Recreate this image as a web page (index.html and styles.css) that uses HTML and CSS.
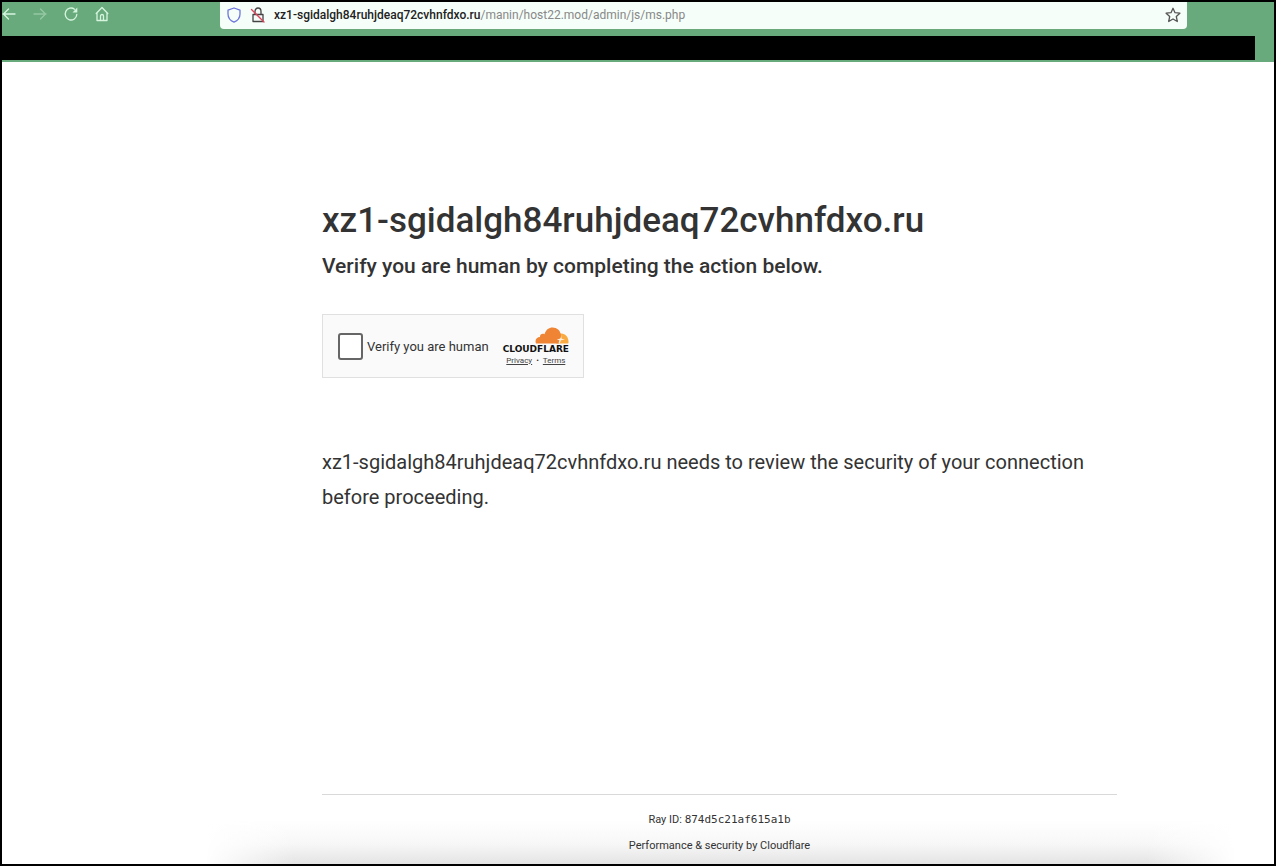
FILE: index.html
```html
<!DOCTYPE html>
<html lang="en">
<head>
<meta charset="utf-8">
<meta name="viewport" content="width=device-width, initial-scale=1">
<title>Verify you are human</title>
<link rel="stylesheet" href="styles.css">
</head>
<body>
<div class="window">
  <header class="chrome">
    <div class="toolbar">
      <nav class="nav" aria-label="Browser">
        <button class="icon-btn" type="button" aria-label="Back"><svg viewBox="0 0 16 16"><path d="M14 8H2M7.500 3 2.500 8l5 5"/></svg></button>
        <button class="icon-btn icon-btn--dim" type="button" aria-label="Forward"><svg viewBox="0 0 16 16"><path d="M2 8h12M8.500 3l5 5-5 5"/></svg></button>
        <button class="icon-btn" type="button" aria-label="Reload"><svg viewBox="0 0 16 16"><path d="M11.500 3.200A5.800 6 0 1 0 13.800 8.500"/><path class="solid" d="M14.300 1.500v5H9.500z"/></svg></button>
        <button class="icon-btn" type="button" aria-label="Home"><svg viewBox="0 0 16 16"><path d="M2.200 7.500 8 1.500l5.800 6M3 7v7.500h10V7M6.500 14.500V10a1.500 1.500 0 0 1 3 0v4.500"/></svg></button>
      </nav>
      <div class="address">
        <svg class="shield" viewBox="0 0 16 16"><path d="M8 1 14 3.200V7c0 4-2.500 6.700-6 8.200C4.500 13.700 2 11 2 7V3.200z"/></svg>
        <svg class="lock" viewBox="0 0 16 16"><path d="M5 7V4.500a3 3.500 0 0 1 6 0V7M3 7.500h10v7H3z"/><path class="slash" d="M1.500 2.500 14 15"/></svg>
        <a class="url" href="#"><b>xz1-sgidalgh84ruhjdeaq72cvhnfdxo.ru</b>/manin/host22.mod/admin/js/ms.php</a>
        <button class="icon-btn star" type="button" aria-label="Bookmark"><svg viewBox="0 0 16 16"><path d="m8 1.300 2 4.400 4.900.5-3.600 3.300 1 5L8 12l-4.300 2.500 1-5L1.100 6.200 6 5.700z"/></svg></button>
      </div>
    </div>
    <div class="redacted"></div>
  </header>
  <div class="page">
    <main class="content">
      <h1 class="domain">xz1-sgidalgh84ruhjdeaq72cvhnfdxo.ru</h1>
      <h2 class="lead">Verify you are human by completing the action below.</h2>
      <div class="widget">
        <label class="check"><input class="box" type="checkbox">Verify you are human</label>
        <div class="brand">
          <svg class="cloud" viewBox="0 0 34 17"><path fill="#f9ab41" d="M25 6.500c5-.8 8.500 3 8.500 8.500 0 1-.3 1.500-1 1.500H21z"/><path fill="#ee8434" d="M1 16.500c-1.500-3.500.8-6.500 4-6.500C4.700 7.500 7 6 9.500 7.200 11 2.500 14 .5 17.500.5c4.500 0 7.800 3 8.300 7.300.2 2-.5 5-1.800 8.700z"/><path fill="#fdeedd" d="M26.300 7.500c.2 2.500-.6 3.500-1.600 4.300l-3 .6 2.600.8-.8 3.300h1.200l1.300-3.300 4-.8-3.300-.7c-.5-1 0-2.500-.4-4.200z"/></svg>
          <span class="brand-name">CLOUDFLARE</span>
          <div class="legal"><a href="#">Privacy</a><span>•</span><a href="#">Terms</a></div>
        </div>
      </div>
      <p class="review">xz1-sgidalgh84ruhjdeaq72cvhnfdxo.ru needs to review the security of your connection before proceeding.</p>
    </main>
    <footer class="footer">
      <div>Ray ID: <code class="ray">874d5c21af615a1b</code></div>
      <div>Performance &amp; security by Cloudflare</div>
    </footer>
  </div>
</div>
</body>
</html>
```
FILE: styles.css
```css
* { box-sizing: border-box; }
body { margin: 0; font-family: Roboto, "Liberation Sans", sans-serif; color: #333; }
.window { display: flex; flex-direction: column; min-height: 100vh; border: 2px solid #000; background: #fff; }
svg { display: block; width: 16px; height: 16px; fill: none; stroke: currentColor; stroke-width: 1.3; stroke-linecap: round; stroke-linejoin: round; }
.chrome { background: #68aa7c; padding-bottom: 2px; }
.toolbar { display: grid; grid-template-columns: 218px 1fr 87px; height: 34px; align-items: start; }
.nav { display: flex; gap: 15px; padding-top: 4px; margin-left: -1px; color: #d6f5df; }
.icon-btn { border: 0; padding: 0; background: none; color: inherit; }
.icon-btn--dim { opacity: .4; }
.solid { fill: currentColor; stroke: none; }
.address { display: flex; align-items: center; height: 27px; padding: 0 6px 2px; gap: 8px; background: #f6fef9; border-radius: 0 0 4px 4px; color: #555; }
.shield { color: #6c76dc; }
.lock { color: #444; }
.slash { stroke: #e0455c; }
.url { flex: 1; font-size: 12px; line-height: 16px; color: #888; text-decoration: none; white-space: nowrap; }
.url b { font-weight: 500; color: #222; }
.redacted { height: 24px; margin-right: 19px; background: #000; }
.page {
  flex: 1;
  display: grid;
  grid-template-columns: 320fr 795fr 157fr;
  grid-template-rows: 1fr auto;
  background:
    linear-gradient(to right, #fff 16%, transparent 23%, transparent 90%, #fff 97%),
    linear-gradient(to top, #e4e4e4, #f7f7f7 20px, #fff 44px);
}
.content { grid-column: 2; padding-top: 134px; }
.domain { margin: 0; font-size: 35px; line-height: 50px; font-weight: 500; }
.lead { margin: 6px 0 0; font-size: 21px; line-height: 28px; font-weight: 500; }
.widget { display: flex; align-items: center; justify-content: space-between; width: 262px; height: 64px; margin-top: 34px; padding: 0 14px 0 15px; border: 1px solid #e0e0e0; background: #fafafa; }
.check { display: flex; align-items: center; gap: 4px; font-size: 13px; }
.box { appearance: none; width: 25px; height: 27px; margin: 0; border: 2px solid #666; border-radius: 3px; background: #fff; }
.brand { display: flex; flex-direction: column; align-items: flex-end; }
.cloud { width: 34px; height: 17px; stroke: none; }
.brand-name { font: 700 9px/10px "DejaVu Sans", sans-serif; color: #111; }
.legal { display: flex; align-self: center; gap: 4px; margin-top: 2px; font-size: 8px; line-height: 10px; }
.legal a { color: #444; }
.review { margin: 67px 0 0; font-size: 20px; line-height: 35px; }
.footer { grid-column: 2; border-top: 1px solid #d9d9d9; padding: 12px 0 5px; text-align: center; font-size: 11px; line-height: 26px; }
.ray { font: 11px "DejaVu Sans Mono", monospace; }
```
